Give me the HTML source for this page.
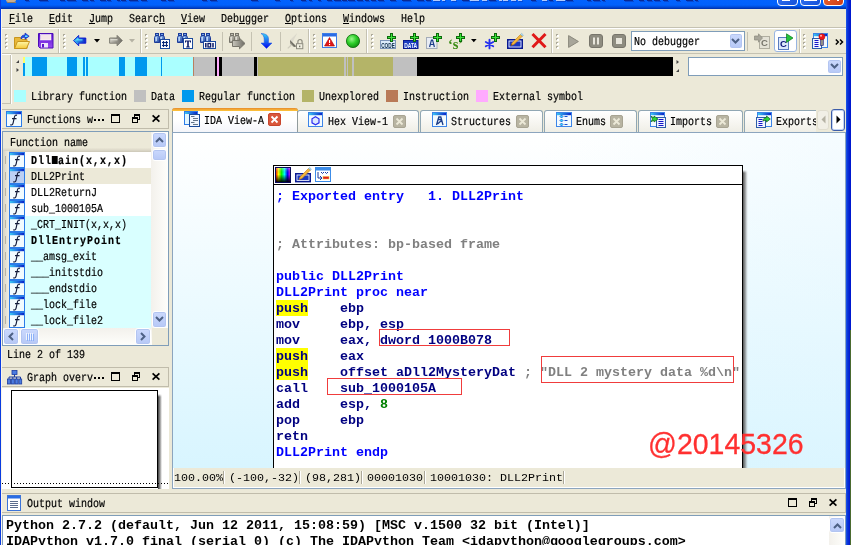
<!DOCTYPE html>
<html><head><meta charset="utf-8"><title>IDA</title>
<style>
html,body{margin:0;padding:0;}
body{width:851px;height:545px;overflow:hidden;background:#ECE9D8;position:relative;font-family:"Liberation Mono",monospace;font-size:10px;color:#000;}
.a{position:absolute;}
svg{position:absolute;overflow:visible;}
.ui{position:absolute;font-family:"Liberation Mono",monospace;font-size:12px;line-height:12px;white-space:pre;transform:scaleX(0.8333);transform-origin:0 0;color:#000;text-rendering:geometricPrecision;-webkit-text-stroke:0.2px #000;}
.ui b{font-weight:bold;letter-spacing:1.2px;}.ui b i{display:inline-block;width:7.2px;height:8px;background:#000;}
.code{position:absolute;font-family:"Liberation Mono",monospace;font-weight:bold;font-size:13.33px;line-height:16px;height:16px;white-space:pre;}
.st{position:absolute;font-family:"Liberation Mono",monospace;font-size:11.67px;line-height:14px;white-space:pre;color:#000;}
.vsep{position:absolute;width:1px;background:#ACA899;box-shadow:1px 0 0 #fff;}
.tsep{position:absolute;width:1px;height:19px;top:32px;background:#C5C2B2;}
.hdl{position:absolute;width:3px;height:16px;background-image:radial-gradient(circle at 2px 2px,#fff 0.8px,transparent 1.1px),radial-gradient(circle at 1px 1px,#ADAA9B 0.8px,transparent 1.1px);background-size:3px 4px;}
.sbtn{position:absolute;box-sizing:border-box;border:1px solid #fff;border-radius:3px;background:linear-gradient(#CBD9FD,#B6C8F6);box-shadow:inset 0 0 0 1px #B3C5F1;}
.tab{position:absolute;box-sizing:border-box;border:1px solid #91A7B4;border-bottom:none;border-radius:3px 3px 0 0;background:linear-gradient(#FFFFFF,#F6F5F0 60%,#EFEEE6);}
.cls{position:absolute;width:13px;height:13px;border-radius:2px;background:#B8B4A2;box-sizing:border-box;border:1px solid #A8A493;}
.nav i{position:absolute;top:0;height:100%;display:block;}
.ptitle{position:absolute;box-sizing:border-box;border:1px solid #C0BCAB;border-left:none;background:#ECE9D8;}
</style></head><body><div id="root" style="position:absolute;left:0;top:0;width:851px;height:545px;overflow:hidden;will-change:transform;">
<div class="a" style="left:0;top:0;width:851px;height:9px;background:linear-gradient(#0262FE 0,#0161FC 55%,#0052E4 72%,#003EC4 88%,#002FA6 100%);"></div>
<div class="a" style="left:6px;top:0;width:10px;height:2px;background:#C9AE8E;border-radius:0 0 2px 2px;"></div>
<div class="a" style="left:7px;top:2px;width:9px;height:1px;background:#8F7B66;"></div>
<div class="a" style="left:25px;top:0;width:4px;height:1px;background:#0A1C7C;opacity:.8"></div><div class="a" style="left:26px;top:1px;width:4px;height:1px;background:#0A2CA0;opacity:.45"></div><div class="a" style="left:39px;top:0;width:9px;height:1px;background:#0A1C7C;opacity:.8"></div><div class="a" style="left:40px;top:1px;width:9px;height:1px;background:#0A2CA0;opacity:.45"></div><div class="a" style="left:60px;top:0;width:5px;height:1px;background:#0A1C7C;opacity:.8"></div><div class="a" style="left:61px;top:1px;width:5px;height:1px;background:#0A2CA0;opacity:.45"></div><div class="a" style="left:67px;top:0;width:9px;height:1px;background:#0A1C7C;opacity:.8"></div><div class="a" style="left:68px;top:1px;width:9px;height:1px;background:#0A2CA0;opacity:.45"></div><div class="a" style="left:82px;top:0;width:6px;height:1px;background:#0A1C7C;opacity:.8"></div><div class="a" style="left:83px;top:1px;width:6px;height:1px;background:#0A2CA0;opacity:.45"></div><div class="a" style="left:90px;top:0;width:4px;height:1px;background:#0A1C7C;opacity:.8"></div><div class="a" style="left:91px;top:1px;width:4px;height:1px;background:#0A2CA0;opacity:.45"></div><div class="a" style="left:100px;top:0;width:6px;height:1px;background:#0A1C7C;opacity:.8"></div><div class="a" style="left:101px;top:1px;width:6px;height:1px;background:#0A2CA0;opacity:.45"></div><div class="a" style="left:107px;top:0;width:4px;height:1px;background:#0A1C7C;opacity:.8"></div><div class="a" style="left:108px;top:1px;width:4px;height:1px;background:#0A2CA0;opacity:.45"></div><div class="a" style="left:117px;top:0;width:3px;height:1px;background:#0A1C7C;opacity:.8"></div><div class="a" style="left:118px;top:1px;width:3px;height:1px;background:#0A2CA0;opacity:.45"></div><div class="a" style="left:121px;top:0;width:5px;height:1px;background:#0A1C7C;opacity:.8"></div><div class="a" style="left:122px;top:1px;width:5px;height:1px;background:#0A2CA0;opacity:.45"></div><div class="a" style="left:129px;top:0;width:9px;height:1px;background:#0A1C7C;opacity:.8"></div><div class="a" style="left:130px;top:1px;width:9px;height:1px;background:#0A2CA0;opacity:.45"></div><div class="a" style="left:141px;top:0;width:6px;height:1px;background:#0A1C7C;opacity:.8"></div><div class="a" style="left:142px;top:1px;width:6px;height:1px;background:#0A2CA0;opacity:.45"></div><div class="a" style="left:161px;top:0;width:5px;height:1px;background:#0A1C7C;opacity:.8"></div><div class="a" style="left:162px;top:1px;width:5px;height:1px;background:#0A2CA0;opacity:.45"></div><div class="a" style="left:168px;top:0;width:6px;height:1px;background:#0A1C7C;opacity:.8"></div><div class="a" style="left:169px;top:1px;width:6px;height:1px;background:#0A2CA0;opacity:.45"></div><div class="a" style="left:202px;top:0;width:5px;height:1px;background:#0A1C7C;opacity:.8"></div><div class="a" style="left:203px;top:1px;width:5px;height:1px;background:#0A2CA0;opacity:.45"></div><div class="a" style="left:210px;top:0;width:7px;height:1px;background:#0A1C7C;opacity:.8"></div><div class="a" style="left:211px;top:1px;width:7px;height:1px;background:#0A2CA0;opacity:.45"></div><div class="a" style="left:251px;top:0;width:7px;height:1px;background:#0A1C7C;opacity:.8"></div><div class="a" style="left:252px;top:1px;width:7px;height:1px;background:#0A2CA0;opacity:.45"></div><div class="a" style="left:275px;top:0;width:5px;height:1px;background:#0A1C7C;opacity:.8"></div><div class="a" style="left:276px;top:1px;width:5px;height:1px;background:#0A2CA0;opacity:.45"></div><div class="a" style="left:290px;top:0;width:3px;height:1px;background:#0A1C7C;opacity:.8"></div><div class="a" style="left:291px;top:1px;width:3px;height:1px;background:#0A2CA0;opacity:.45"></div><div class="a" style="left:301px;top:0;width:5px;height:1px;background:#0A1C7C;opacity:.8"></div><div class="a" style="left:302px;top:1px;width:5px;height:1px;background:#0A2CA0;opacity:.45"></div><div class="a" style="left:309px;top:0;width:3px;height:1px;background:#0A1C7C;opacity:.8"></div><div class="a" style="left:310px;top:1px;width:3px;height:1px;background:#0A2CA0;opacity:.45"></div><div class="a" style="left:318px;top:0;width:3px;height:1px;background:#0A1C7C;opacity:.8"></div><div class="a" style="left:319px;top:1px;width:3px;height:1px;background:#0A2CA0;opacity:.45"></div><div class="a" style="left:327px;top:0;width:5px;height:1px;background:#0A1C7C;opacity:.8"></div><div class="a" style="left:328px;top:1px;width:5px;height:1px;background:#0A2CA0;opacity:.45"></div><div class="a" style="left:334px;top:0;width:7px;height:1px;background:#0A1C7C;opacity:.8"></div><div class="a" style="left:335px;top:1px;width:7px;height:1px;background:#0A2CA0;opacity:.45"></div><div class="a" style="left:342px;top:0;width:5px;height:1px;background:#0A1C7C;opacity:.8"></div><div class="a" style="left:343px;top:1px;width:5px;height:1px;background:#0A2CA0;opacity:.45"></div><div class="a" style="left:348px;top:0;width:7px;height:1px;background:#0A1C7C;opacity:.8"></div><div class="a" style="left:349px;top:1px;width:7px;height:1px;background:#0A2CA0;opacity:.45"></div><div class="a" style="left:357px;top:0;width:6px;height:1px;background:#0A1C7C;opacity:.8"></div><div class="a" style="left:358px;top:1px;width:6px;height:1px;background:#0A2CA0;opacity:.45"></div><div class="a" style="left:365px;top:0;width:4px;height:1px;background:#0A1C7C;opacity:.8"></div><div class="a" style="left:366px;top:1px;width:4px;height:1px;background:#0A2CA0;opacity:.45"></div><div class="a" style="left:371px;top:0;width:5px;height:1px;background:#0A1C7C;opacity:.8"></div><div class="a" style="left:372px;top:1px;width:5px;height:1px;background:#0A2CA0;opacity:.45"></div><div class="a" style="left:378px;top:0;width:6px;height:1px;background:#0A1C7C;opacity:.8"></div><div class="a" style="left:379px;top:1px;width:6px;height:1px;background:#0A2CA0;opacity:.45"></div><div class="a" style="left:390px;top:0;width:6px;height:1px;background:#0A1C7C;opacity:.8"></div><div class="a" style="left:391px;top:1px;width:6px;height:1px;background:#0A2CA0;opacity:.45"></div><div class="a" style="left:402px;top:0;width:9px;height:1px;background:#0A1C7C;opacity:.8"></div><div class="a" style="left:403px;top:1px;width:9px;height:1px;background:#0A2CA0;opacity:.45"></div><div class="a" style="left:417px;top:0;width:7px;height:1px;background:#0A1C7C;opacity:.8"></div><div class="a" style="left:418px;top:1px;width:7px;height:1px;background:#0A2CA0;opacity:.45"></div><div class="a" style="left:426px;top:0;width:5px;height:1px;background:#0A1C7C;opacity:.8"></div><div class="a" style="left:427px;top:1px;width:5px;height:1px;background:#0A2CA0;opacity:.45"></div><div class="a" style="left:433px;top:0;width:7px;height:1px;background:#DDE6FF;opacity:.8"></div><div class="a" style="left:434px;top:1px;width:7px;height:1px;background:#0A2CA0;opacity:.45"></div><div class="a" style="left:442px;top:0;width:3px;height:1px;background:#DDE6FF;opacity:.8"></div><div class="a" style="left:443px;top:1px;width:3px;height:1px;background:#0A2CA0;opacity:.45"></div><div class="a" style="left:451px;top:0;width:5px;height:1px;background:#DDE6FF;opacity:.8"></div><div class="a" style="left:452px;top:1px;width:5px;height:1px;background:#0A2CA0;opacity:.45"></div><div class="a" style="left:462px;top:0;width:7px;height:1px;background:#0A1C7C;opacity:.8"></div><div class="a" style="left:463px;top:1px;width:7px;height:1px;background:#0A2CA0;opacity:.45"></div><div class="a" style="left:470px;top:0;width:9px;height:1px;background:#DDE6FF;opacity:.8"></div><div class="a" style="left:471px;top:1px;width:9px;height:1px;background:#0A2CA0;opacity:.45"></div><div class="a" style="left:482px;top:0;width:5px;height:1px;background:#DDE6FF;opacity:.8"></div><div class="a" style="left:483px;top:1px;width:5px;height:1px;background:#0A2CA0;opacity:.45"></div><div class="a" style="left:489px;top:0;width:7px;height:1px;background:#0A1C7C;opacity:.8"></div><div class="a" style="left:490px;top:1px;width:7px;height:1px;background:#0A2CA0;opacity:.45"></div><div class="a" style="left:499px;top:0;width:3px;height:1px;background:#DDE6FF;opacity:.8"></div><div class="a" style="left:500px;top:1px;width:3px;height:1px;background:#0A2CA0;opacity:.45"></div><div class="a" style="left:503px;top:0;width:5px;height:1px;background:#DDE6FF;opacity:.8"></div><div class="a" style="left:504px;top:1px;width:5px;height:1px;background:#0A2CA0;opacity:.45"></div><div class="a" style="left:511px;top:0;width:5px;height:1px;background:#DDE6FF;opacity:.8"></div><div class="a" style="left:512px;top:1px;width:5px;height:1px;background:#0A2CA0;opacity:.45"></div><div class="a" style="left:518px;top:0;width:4px;height:1px;background:#DDE6FF;opacity:.8"></div><div class="a" style="left:519px;top:1px;width:4px;height:1px;background:#0A2CA0;opacity:.45"></div><div class="a" style="left:531px;top:0;width:5px;height:1px;background:#0A1C7C;opacity:.8"></div><div class="a" style="left:532px;top:1px;width:5px;height:1px;background:#0A2CA0;opacity:.45"></div><div class="a" style="left:542px;top:0;width:5px;height:1px;background:#DDE6FF;opacity:.8"></div><div class="a" style="left:543px;top:1px;width:5px;height:1px;background:#0A2CA0;opacity:.45"></div><div class="a" style="left:549px;top:0;width:4px;height:1px;background:#0A1C7C;opacity:.8"></div><div class="a" style="left:550px;top:1px;width:4px;height:1px;background:#0A2CA0;opacity:.45"></div><div class="a" style="left:556px;top:0;width:9px;height:1px;background:#DDE6FF;opacity:.8"></div><div class="a" style="left:557px;top:1px;width:9px;height:1px;background:#0A2CA0;opacity:.45"></div><div class="a" style="left:566px;top:0;width:7px;height:1px;background:#0A1C7C;opacity:.8"></div><div class="a" style="left:567px;top:1px;width:7px;height:1px;background:#0A2CA0;opacity:.45"></div><div class="a" style="left:587px;top:0;width:4px;height:1px;background:#0A1C7C;opacity:.8"></div><div class="a" style="left:588px;top:1px;width:4px;height:1px;background:#0A2CA0;opacity:.45"></div><div class="a" style="left:593px;top:0;width:7px;height:1px;background:#0A1C7C;opacity:.8"></div><div class="a" style="left:594px;top:1px;width:7px;height:1px;background:#0A2CA0;opacity:.45"></div><div class="a" style="left:602px;top:0;width:3px;height:1px;background:#0A1C7C;opacity:.8"></div><div class="a" style="left:603px;top:1px;width:3px;height:1px;background:#0A2CA0;opacity:.45"></div><div class="a" style="left:624px;top:0;width:9px;height:1px;background:#0A1C7C;opacity:.8"></div><div class="a" style="left:625px;top:1px;width:9px;height:1px;background:#0A2CA0;opacity:.45"></div><div class="a" style="left:639px;top:0;width:5px;height:1px;background:#0A1C7C;opacity:.8"></div><div class="a" style="left:640px;top:1px;width:5px;height:1px;background:#0A2CA0;opacity:.45"></div><div class="a" style="left:647px;top:0;width:5px;height:1px;background:#0A1C7C;opacity:.8"></div><div class="a" style="left:648px;top:1px;width:5px;height:1px;background:#0A2CA0;opacity:.45"></div><div class="a" style="left:654px;top:0;width:6px;height:1px;background:#0A1C7C;opacity:.8"></div><div class="a" style="left:655px;top:1px;width:6px;height:1px;background:#0A2CA0;opacity:.45"></div><div class="a" style="left:663px;top:0;width:5px;height:1px;background:#0A1C7C;opacity:.8"></div><div class="a" style="left:664px;top:1px;width:5px;height:1px;background:#0A2CA0;opacity:.45"></div><div class="a" style="left:676px;top:0;width:4px;height:1px;background:#0A1C7C;opacity:.8"></div><div class="a" style="left:677px;top:1px;width:4px;height:1px;background:#0A2CA0;opacity:.45"></div><div class="a" style="left:686px;top:0;width:7px;height:1px;background:#0A1C7C;opacity:.8"></div><div class="a" style="left:687px;top:1px;width:7px;height:1px;background:#0A2CA0;opacity:.45"></div><div class="a" style="left:695px;top:0;width:3px;height:1px;background:#0A1C7C;opacity:.8"></div><div class="a" style="left:696px;top:1px;width:3px;height:1px;background:#0A2CA0;opacity:.45"></div><div class="a" style="left:777px;top:-14px;width:21px;height:20px;border-radius:4px;border:1px solid #fff;box-sizing:border-box;background:linear-gradient(135deg,#3C7CF8,#1450D8);"></div>
<div class="a" style="left:800px;top:-14px;width:21px;height:20px;border-radius:4px;border:1px solid #fff;box-sizing:border-box;background:linear-gradient(135deg,#3C7CF8,#1450D8);"></div>
<div class="a" style="left:823px;top:-14px;width:21px;height:20px;border-radius:4px;border:1px solid #fff;box-sizing:border-box;background:linear-gradient(135deg,#F0703C,#D03C14);"></div>
<div class="a" style="left:782px;top:0;width:8px;height:1px;background:#fff;"></div>
<div class="a" style="left:804px;top:0;width:13px;height:1px;background:#fff;"></div>
<div class="a" style="left:828px;top:0;width:2px;height:1px;background:#fff;"></div><div class="a" style="left:837px;top:0;width:2px;height:1px;background:#fff;"></div>
<div class="a" style="left:0;top:0;width:1px;height:545px;background:#0A3CE0;"></div><div class="a" style="left:1px;top:9px;width:1px;height:536px;background:#FAF6EA;"></div>
<div class="a" style="left:846px;top:0;width:4px;height:545px;background:linear-gradient(90deg,#1F5BEA,#0A34D8 40%,#0019CF);"></div><div class="a" style="left:850px;top:0;width:1px;height:330px;background:#0019CF;"></div><div class="a" style="left:850px;top:330px;width:1px;height:215px;background:#4A6A30;"></div>
<div class="ui" style="left:9px;top:13px;"><u>F</u>ile</div><div class="ui" style="left:49px;top:13px;"><u>E</u>dit</div><div class="ui" style="left:89px;top:13px;"><u>J</u>ump</div><div class="ui" style="left:129px;top:13px;">Searc<u>h</u></div><div class="ui" style="left:181px;top:13px;"><u>V</u>iew</div><div class="ui" style="left:221px;top:13px;">Deb<u>u</u>gger</div><div class="ui" style="left:285px;top:13px;"><u>O</u>ptions</div><div class="ui" style="left:343px;top:13px;"><u>W</u>indows</div><div class="ui" style="left:401px;top:13px;">Help</div><div class="a" style="left:2px;top:27px;width:844px;height:1px;background:#C5C2B2;"></div><div class="a" style="left:2px;top:28px;width:844px;height:1px;background:#fff;"></div><div class="a" style="left:2px;top:53px;width:844px;height:1px;background:#C5C2B2;"></div><div class="a" style="left:2px;top:54px;width:9px;height:1px;background:#fff;"></div><div class="a" style="left:58px;top:29px;width:1px;height:24px;background:#C5C2B2;"></div><div class="a" style="left:59px;top:29px;width:1px;height:24px;background:#fff;"></div><div class="a" style="left:140px;top:29px;width:1px;height:24px;background:#C5C2B2;"></div><div class="a" style="left:141px;top:29px;width:1px;height:24px;background:#fff;"></div><div class="a" style="left:308px;top:29px;width:1px;height:24px;background:#C5C2B2;"></div><div class="a" style="left:309px;top:29px;width:1px;height:24px;background:#fff;"></div><div class="a" style="left:366px;top:29px;width:1px;height:24px;background:#C5C2B2;"></div><div class="a" style="left:367px;top:29px;width:1px;height:24px;background:#fff;"></div><div class="a" style="left:551px;top:29px;width:1px;height:24px;background:#C5C2B2;"></div><div class="a" style="left:552px;top:29px;width:1px;height:24px;background:#fff;"></div><div class="a" style="left:799px;top:29px;width:1px;height:24px;background:#C5C2B2;"></div><div class="a" style="left:800px;top:29px;width:1px;height:24px;background:#fff;"></div><div class="hdl" style="left:5px;top:34px;"></div><div class="hdl" style="left:63px;top:34px;"></div><div class="hdl" style="left:145px;top:34px;"></div><div class="hdl" style="left:313px;top:34px;"></div><div class="hdl" style="left:371px;top:34px;"></div><div class="hdl" style="left:556px;top:34px;"></div><div class="hdl" style="left:803px;top:34px;"></div><div class="tsep" style="left:222px;"></div><div class="tsep" style="left:251px;"></div><div class="tsep" style="left:280px;"></div><div class="tsep" style="left:747px;"></div><svg width="0" height="0" style="left:0;top:0"><defs>
<linearGradient id="gFold" x1="0" y1="0" x2="0" y2="1"><stop offset="0" stop-color="#FFF7A8"/><stop offset="1" stop-color="#F5C93A"/></linearGradient>
<linearGradient id="gBlue" x1="0" y1="0" x2="1" y2="0"><stop offset="0" stop-color="#39C6F4"/><stop offset="1" stop-color="#0A22C8"/></linearGradient>
<linearGradient id="gBlueV" x1="0" y1="0" x2="0" y2="1"><stop offset="0" stop-color="#35D7F5"/><stop offset="1" stop-color="#0000F0"/></linearGradient>
<linearGradient id="gGray" x1="0" y1="0" x2="1" y2="0"><stop offset="0" stop-color="#C8C6BC"/><stop offset="1" stop-color="#6C6A62"/></linearGradient>
<linearGradient id="gBin" x1="0" y1="0" x2="1" y2="1"><stop offset="0" stop-color="#9CC8F8"/><stop offset="1" stop-color="#1A3C9C"/></linearGradient>
<linearGradient id="gBinG" x1="0" y1="0" x2="1" y2="1"><stop offset="0" stop-color="#D4D2C8"/><stop offset="1" stop-color="#7A786E"/></linearGradient>
<radialGradient id="gBall" cx="0.4" cy="0.35" r="0.7"><stop offset="0" stop-color="#9CF58C"/><stop offset="0.5" stop-color="#2FCF2A"/><stop offset="1" stop-color="#0E8A0E"/></radialGradient>
<linearGradient id="gPurp" x1="0" y1="0" x2="0" y2="1"><stop offset="0" stop-color="#5A0FD0"/><stop offset="1" stop-color="#9A4CF0"/></linearGradient>
<linearGradient id="gRain" x1="0" y1="0" x2="1" y2="0"><stop offset="0" stop-color="#f00"/><stop offset="0.2" stop-color="#ff0"/><stop offset="0.4" stop-color="#0f0"/><stop offset="0.6" stop-color="#0ff"/><stop offset="0.8" stop-color="#00f"/><stop offset="1" stop-color="#f0f"/></linearGradient>
<linearGradient id="gRainV" x1="0" y1="0" x2="0" y2="1"><stop offset="0" stop-color="#fff" stop-opacity=".35"/><stop offset="0.45" stop-color="#000" stop-opacity="0"/><stop offset="1" stop-color="#000" stop-opacity=".95"/></linearGradient>
<linearGradient id="gF" x1="0" y1="0" x2="0" y2="1"><stop offset="0" stop-color="#2A6CE0"/><stop offset="0.3" stop-color="#9CC4F8"/><stop offset="0.45" stop-color="#fff"/></linearGradient>
</defs></svg><svg style="left:14px;top:33px" width="16" height="16" viewBox="0 0 16 16"><path d="M0.5 4.5h6l1.5 2h5v9h-12.5z" fill="#E9B93A" stroke="#C8961E"/><path d="M3.5 8.5h12l-3 7h-12z" fill="url(#gFold)" stroke="#C8961E"/><path d="M7 6 C7 2.5 9 2 11 2 V0 L15.2 3.2 L11 6.3 V4.3 C9.5 4.3 8.5 4.5 7 6Z" fill="#1E50E8" stroke="#0A1CB0" stroke-width=".6"/><path d="M11 2.6h2l1 .7-1 .7h-2z" fill="#5CE8FF"/></svg><svg style="left:38px;top:33px" width="16" height="16" viewBox="0 0 16 16"><path d="M0.5 0.5h14.5v14.5h-13l-1.5-1.5z" fill="url(#gPurp)" stroke="#4A0CB8"/><rect x="2.5" y="1.5" width="10.5" height="5.5" fill="#F4E4E8" stroke="#fff" stroke-width=".5"/><rect x="3" y="10" width="7" height="4.5" fill="#EDE6FA"/><rect x="4" y="11" width="2" height="3.5" fill="#5A12C8"/></svg><svg style="left:73px;top:35px" width="14" height="12" viewBox="0 0 14 12"><path d="M0.500 5.600 L5.700 0.400 V3 H12.800 V8.200 H5.700 V10.800Z" fill="url(#gBlue)" stroke="#0A14D0" stroke-width=".9"/><path d="M2.200 5.500 L5.400 2.600 V4.300 H9.500 V5.500Z" fill="#6CF0FF" opacity=".8"/></svg><svg style="left:94px;top:39px" width="6" height="4" viewBox="0 0 6 4"><path d="M0 0h6L3 3.5z" fill="#000"/></svg><svg style="left:109px;top:35px" width="14" height="12" viewBox="0 0 14 12"><path d="M13.300 5.600 L8.100 0.400 V3 H0.600 V8.200 H8.100 V10.800Z" fill="url(#gGray)" stroke="#77756B" stroke-width=".9"/><path d="M1.500 4h7v1.400h-7z" fill="#E4E2D8" opacity=".8"/></svg><svg style="left:129px;top:39px" width="6" height="4" viewBox="0 0 6 4"><path d="M0 0h6L3 3.5z" fill="#B5B2A4"/></svg><svg style="left:154px;top:33px" width="17" height="17" viewBox="0 0 17 17"><g><rect x="1.5" y="0.5" width="3" height="3" fill="#6EA0E8" stroke="#1C3A98"/><rect x="6.5" y="0.5" width="3" height="3" fill="#6EA0E8" stroke="#1C3A98"/><path d="M0.5 4.5 L1.5 2.5 H4.5 L5.5 4.5 V9.5 H0.5Z" fill="url(#gBin)" stroke="#1C3A98"/><path d="M5.5 4.5 L6.5 2.5 H9.5 L10.5 4.5 V9.5 H5.5Z" fill="url(#gBin)" stroke="#1C3A98"/><rect x="1.5" y="4" width="1.5" height="4" fill="#CFE6FF" opacity=".8"/><rect x="6.5" y="4" width="1.5" height="4" fill="#CFE6FF" opacity=".8"/></g><rect x="6.5" y="6.5" width="9" height="9" fill="#fff" stroke="#1C4A9C"/><path d="M9.5 8v6M12.5 8v6M8 9.5h6M8 12.5h6" stroke="#0A2A78" stroke-width="1.2"/></svg><svg style="left:177px;top:33px" width="17" height="17" viewBox="0 0 17 17"><g><rect x="1.5" y="0.5" width="3" height="3" fill="#6EA0E8" stroke="#1C3A98"/><rect x="6.5" y="0.5" width="3" height="3" fill="#6EA0E8" stroke="#1C3A98"/><path d="M0.5 4.5 L1.5 2.5 H4.5 L5.5 4.5 V9.5 H0.5Z" fill="url(#gBin)" stroke="#1C3A98"/><path d="M5.5 4.5 L6.5 2.5 H9.5 L10.5 4.5 V9.5 H5.5Z" fill="url(#gBin)" stroke="#1C3A98"/><rect x="1.5" y="4" width="1.5" height="4" fill="#CFE6FF" opacity=".8"/><rect x="6.5" y="4" width="1.5" height="4" fill="#CFE6FF" opacity=".8"/></g><rect x="6.5" y="5.5" width="9" height="10" fill="#fff" stroke="#1C4A9C"/><path d="M8 7.5h6v2h-1v-1h-1.2v5h1v1h-3.6v-1h1v-5H9v1H8z" fill="#0A1A68"/></svg><svg style="left:200px;top:33px" width="17" height="17" viewBox="0 0 17 17"><g><rect x="1.5" y="0.5" width="3" height="3" fill="#6EA0E8" stroke="#1C3A98"/><rect x="6.5" y="0.5" width="3" height="3" fill="#6EA0E8" stroke="#1C3A98"/><path d="M0.5 4.5 L1.5 2.5 H4.5 L5.5 4.5 V9.5 H0.5Z" fill="url(#gBin)" stroke="#1C3A98"/><path d="M5.5 4.5 L6.5 2.5 H9.5 L10.5 4.5 V9.5 H5.5Z" fill="url(#gBin)" stroke="#1C3A98"/><rect x="1.5" y="4" width="1.5" height="4" fill="#CFE6FF" opacity=".8"/><rect x="6.5" y="4" width="1.5" height="4" fill="#CFE6FF" opacity=".8"/></g><rect x="3.5" y="8.5" width="12" height="7" fill="#fff" stroke="#1C4A9C"/><path d="M5.800 10v4.500M13 10v4.500" stroke="#0A1A68" stroke-width="1.500"/><rect x="8" y="10.500" width="2.600" height="3.500" fill="none" stroke="#0A1A68" stroke-width="1.300"/></svg><svg style="left:229px;top:33px" width="17" height="17" viewBox="0 0 17 17"><g><rect x="1.5" y="0.5" width="3" height="3" fill="#BDBBB0" stroke="#77756B"/><rect x="6.5" y="0.5" width="3" height="3" fill="#BDBBB0" stroke="#77756B"/><path d="M0.5 4.5 L1.5 2.5 H4.5 L5.5 4.5 V9.5 H0.5Z" fill="url(#gBinG)" stroke="#77756B"/><path d="M5.5 4.5 L6.5 2.5 H9.5 L10.5 4.5 V9.5 H5.5Z" fill="url(#gBinG)" stroke="#77756B"/><rect x="1.5" y="4" width="1.5" height="4" fill="#E8E6DC" opacity=".8"/><rect x="6.5" y="4" width="1.5" height="4" fill="#E8E6DC" opacity=".8"/></g><path d="M3.5 7.5h7V5.2L16 10.5 10.5 15.8V13.5h-7z" fill="url(#gGray)" stroke="#77756B"/></svg><svg style="left:260px;top:33px" width="13" height="16" viewBox="0 0 13 16"><path d="M1 0.5 C5 0.5 8.5 2 8.5 6 V10 H12 L6.5 15.5 L1 10 H4.2 V6.5 C4.2 3.5 3 1.5 1 0.5Z" fill="url(#gBlueV)" stroke="#1C50E0" stroke-width=".5"/></svg><svg style="left:287px;top:33px" width="17" height="17" viewBox="0 0 17 17"><path d="M10.300 0 L3 7 L5.500 9.500Z" fill="#DCD9CC"/><path d="M3 7 L9.500 13.500 L7 13.900 L3.200 10.800Z" fill="#6E6C62"/><path d="M3.200 9 L6.500 13 L5.500 13.300 L3.200 10.800Z" fill="#A8A69A"/><path d="M4.600 12.700 L1.200 15.800 L0.300 15 L3.600 11.700Z" fill="#CFCCBE"/><rect x="9.500" y="10.700" width="6.300" height="5" fill="#F2F0E2" stroke="#8E8C80"/><path d="M10.900 10.500V8.600a2.100 2.100 0 0 1 4.200 0V10.500" fill="none" stroke="#8E8C80" stroke-width="1.200"/><rect x="12.200" y="12.600" width="1.100" height="1.600" fill="#55534A"/></svg><svg style="left:322px;top:33px" width="15" height="15" viewBox="0 0 15 15"><rect x="0.5" y="0.5" width="14" height="14" fill="#fff" stroke="#3C7CE8"/><rect x="1" y="1" width="13" height="2.5" fill="#2A6CE4"/><path d="M7.500 4.500 L12.500 13 H2.500Z" fill="#E01818" stroke="#A80808" stroke-width=".6"/><rect x="7" y="7" width="1.100" height="3" fill="#fff"/><rect x="7" y="11" width="1.100" height="1.100" fill="#fff"/></svg><svg style="left:346px;top:34px" width="14" height="14" viewBox="0 0 14 14"><circle cx="7" cy="7" r="6.600" fill="url(#gBall)" stroke="#0A6A0A" stroke-width=".8"/></svg><svg style="left:380px;top:33px" width="17" height="17" viewBox="0 0 17 17"><rect x="0.500" y="7.500" width="15" height="8" fill="#DDEBFA" stroke="#7C94B8"/><text x="8" y="14.600" font-family="Liberation Sans" font-weight="bold" font-size="7" text-anchor="middle" fill="#0A2A48" textLength="13.500" lengthAdjust="spacingAndGlyphs">CODE</text><g transform="translate(7 0)"><path d="M3 0h3v3h3v3h-3v3h-3v-3h-3v-3h3z" fill="#0C6A0C"/><path d="M4 1h1v3h3v1h-3v3h-1v-3h-3v-1h3z" fill="#3CE43C"/></g></svg><svg style="left:403px;top:33px" width="17" height="17" viewBox="0 0 17 17"><rect x="0.500" y="7.500" width="14.500" height="8" fill="#1C3CC0" stroke="#0A1A90"/><text x="7.700" y="14.600" font-family="Liberation Sans" font-weight="bold" font-size="7" text-anchor="middle" fill="#F0F6FF" textLength="13" lengthAdjust="spacingAndGlyphs">DATA</text><g transform="translate(7 0)"><path d="M3 0h3v3h3v3h-3v3h-3v-3h-3v-3h3z" fill="#0C6A0C"/><path d="M4 1h1v3h3v1h-3v3h-1v-3h-3v-1h3z" fill="#3CE43C"/></g></svg><svg style="left:426px;top:33px" width="17" height="17" viewBox="0 0 17 17"><rect x="0.500" y="4.500" width="10.500" height="11" fill="#E8ECF4" stroke="#A4ACB8"/><path d="M3.600 14 L5.300 7.500 h1.400 L8.400 14 M4.600 11.500h2.800 M5 7h2" fill="none" stroke="#1C3C88" stroke-width="1.200"/><g transform="translate(7 0)"><path d="M3 0h3v3h3v3h-3v3h-3v-3h-3v-3h3z" fill="#0C6A0C"/><path d="M4 1h1v3h3v1h-3v3h-1v-3h-3v-1h3z" fill="#3CE43C"/></g></svg><svg style="left:448px;top:33px" width="18" height="17" viewBox="0 0 18 17"><text x="0" y="16" font-family="Liberation Serif" font-weight="bold" font-size="14.500" fill="#3A8C14">‘s’</text><g transform="translate(8 0)"><path d="M3 0h3v3h3v3h-3v3h-3v-3h-3v-3h3z" fill="#0C6A0C"/><path d="M4 1h1v3h3v1h-3v3h-1v-3h-3v-1h3z" fill="#3CE43C"/></g></svg><svg style="left:471px;top:39px" width="6" height="4" viewBox="0 0 6 4"><path d="M0 0h5.600L2.800 3.300z" fill="#000"/></svg><svg style="left:484px;top:33px" width="17" height="17" viewBox="0 0 17 17"><g stroke="#2430F0" stroke-width="1.900" stroke-linecap="round"><path d="M5.500 6.800v8.600M1.800 9l7.400 4.300M1.800 13.300l7.400-4.300"/></g><g transform="translate(7 0)"><path d="M3 0h3v3h3v3h-3v3h-3v-3h-3v-3h3z" fill="#0C6A0C"/><path d="M4 1h1v3h3v1h-3v3h-1v-3h-3v-1h3z" fill="#3CE43C"/></g></svg><svg style="left:507px;top:33px" width="17" height="17" viewBox="0 0 17 17"><rect x="0.700" y="6.700" width="14.600" height="8.600" fill="#1C38C0" stroke="#0A1A90" stroke-width="1.400"/><rect x="2" y="8" width="12" height="6" fill="none" stroke="#fff" stroke-width=".8"/><path d="M4 12.500 L5 10 L13.500 1.500 L15.500 3 L7 11.500Z" fill="#F4B83C" stroke="#C47A14" stroke-width=".6"/><path d="M13.500 1.500 L14.600 0.400 L16.400 2 L15.500 3Z" fill="#BCE4F8" stroke="#5A9CC8" stroke-width=".5"/><path d="M4 12.500 L4.500 11.200 L5.500 12Z" fill="#402000"/></svg><svg style="left:531px;top:33px" width="16" height="15" viewBox="0 0 16 15"><path d="M1.500 1 L14.500 14.200 M14.500 1 L1.500 14.200" stroke="#E01818" stroke-width="3" stroke-linecap="butt"/></svg><svg style="left:568px;top:35px" width="11" height="13" viewBox="0 0 11 13"><path d="M0.600 0.600 L10.400 6.500 L0.600 12.400Z" fill="#A8A69A" stroke="#8A887C"/></svg><svg style="left:589px;top:34px" width="14" height="14" viewBox="0 0 14 14"><rect x="0.500" y="0.500" width="13" height="13" rx="2.500" fill="#8E8C80" stroke="#77756B"/><rect x="4" y="3.500" width="2" height="7" fill="#E8E6DC"/><rect x="8" y="3.500" width="2" height="7" fill="#E8E6DC"/></svg><svg style="left:612px;top:34px" width="14" height="14" viewBox="0 0 14 14"><rect x="0.500" y="0.500" width="13" height="13" rx="2.500" fill="#8E8C80" stroke="#77756B"/><rect x="4" y="4" width="6" height="6" fill="#E8E6DC"/></svg><div class="a" style="left:631px;top:31px;width:114px;height:20px;box-sizing:border-box;border:1px solid #7F9DB9;background:#fff;"></div><div class="ui" style="left:634px;top:36px;">No debugger</div><div class="sbtn" style="left:729px;top:33px;width:14px;height:16px;"></div><svg style="left:731px;top:38px" width="9" height="7" viewBox="0 0 9 7"><path d="M1 1 L4.500 4.500 L8 1" fill="none" stroke="#4D6185" stroke-width="2"/></svg><svg style="left:754px;top:33px" width="17" height="17" viewBox="0 0 17 17"><rect x="5.500" y="3.500" width="10" height="12" fill="#E4E2D6" stroke="#B0AEA0"/><text x="10.500" y="13" font-family="Liberation Sans" font-weight="bold" font-size="9.500" text-anchor="middle" fill="#77756B">C</text><path d="M0.500 3h4V0.800L8.500 5 4.500 9.200V7h-4z" fill="#A8A69A" stroke="#8A887C" stroke-width=".7"/></svg><div class="a" style="left:774px;top:30px;width:23px;height:22px;box-sizing:border-box;border:1px solid #98B5E2;border-radius:3px;background:#fff;"></div><svg style="left:778px;top:33px" width="17" height="17" viewBox="0 0 17 17"><rect x="0.500" y="4.500" width="10" height="12" fill="#DCE8FA" stroke="#5A7CC0"/><text x="5.500" y="14" font-family="Liberation Sans" font-weight="bold" font-size="9.500" text-anchor="middle" fill="#0A1478">C</text><path d="M8.500 0.800 L15 5 L8.500 9.500Z" fill="#22C43C" stroke="#0A7A1A" stroke-width=".7"/></svg><svg style="left:812px;top:33px" width="17" height="16" viewBox="0 0 17 16"><rect x="1.500" y="0.500" width="14" height="14" fill="#F2FAFF" stroke="#3C84E8"/><rect x="2" y="1" width="13" height="2.200" fill="url(#gBlue)"/><rect x="0.500" y="5.500" width="9" height="10" fill="#EEF4FF" stroke="#2C5CA8"/><path d="M2.500 7.500h4M2.500 9.500h4M2.500 11.500h4M2.500 13.500h4" stroke="#1414C8" stroke-width="1"/><rect x="8.600" y="6.500" width="2.700" height="6" fill="#908E86" stroke="#1C1C78" stroke-width=".6"/><circle cx="9.900" cy="3.700" r="3" fill="#F01818" stroke="#B00808" stroke-width=".5"/><circle cx="9" cy="2.800" r="1" fill="#FFB8B8"/></svg><svg style="left:835px;top:39px" width="9" height="6" viewBox="0 0 9 6"><path d="M0.800 0.500 L3.300 3 L0.800 5.500 M5 0.500 L7.500 3 L5 5.500" fill="none" stroke="#000" stroke-width="1.500"/></svg><div class="a" style="left:10px;top:55px;width:1px;height:49px;background:#C5C2B2;"></div><div class="a" style="left:11px;top:55px;width:1px;height:49px;background:#fff;"></div><div class="a" style="left:2px;top:103px;width:9px;height:1px;background:#C5C2B2;"></div><svg style="left:16px;top:60px" width="4" height="12" viewBox="0 0 4 12"><path d="M3 0v3h-3z" fill="#444"/><path d="M0.500 8l2.500 2-2.500 2z" fill="#444"/></svg><div class="a nav" style="left:0;top:57px;width:700px;height:19px;"><i style="left:23px;width:2px;background:#0099EE"></i><i style="left:25px;width:7px;background:#AAFFFF"></i><i style="left:32px;width:15px;background:#0099EE"></i><i style="left:47px;width:20px;background:#AAFFFF"></i><i style="left:67px;width:10px;background:#0099EE"></i><i style="left:77px;width:6px;background:#AAFFFF"></i><i style="left:83px;width:1.5px;background:#0099EE"></i><i style="left:84.5px;width:1.5px;background:#AAFFFF"></i><i style="left:86px;width:2px;background:#0099EE"></i><i style="left:88px;width:31px;background:#AAFFFF"></i><i style="left:119px;width:6px;background:#0099EE"></i><i style="left:125px;width:10px;background:#AAFFFF"></i><i style="left:135px;width:12px;background:#0099EE"></i><i style="left:147px;width:14px;background:#AAFFFF"></i><i style="left:161px;width:1px;background:#0099EE"></i><i style="left:162px;width:31px;background:#AAFFFF"></i><i style="left:193px;width:1px;background:#B98060"></i><i style="left:194px;width:21px;background:#C0C0C0"></i><i style="left:215px;width:2px;background:#000"></i><i style="left:217px;width:2px;background:#FFAAFF"></i><i style="left:219px;width:3px;background:#000"></i><i style="left:222px;width:32px;background:#C0C0C0"></i><i style="left:254px;width:3px;background:#000"></i><i style="left:257px;width:1px;background:#C0C0C0"></i><i style="left:258px;width:135px;background:#B4B468"></i><i style="left:393px;width:24px;background:#C0C0C0"></i><i style="left:417px;width:256px;background:#000"></i><i style="left:343.7px;width:2.1000000000000227px;background:#C0C0C0"></i><i style="left:347px;width:1px;background:#C0C0C0"></i><i style="left:351.5px;width:2.5px;background:#C0C0C0"></i><i style="left:23px;width:2px;height:6px;background:#FFFF66"></i></div><svg style="left:676px;top:60px" width="4" height="14" viewBox="0 0 4 14"><path d="M0.500 0l2.500 2-2.500 2z" fill="#444"/><path d="M3 9v3h-3z" fill="#444"/></svg><div class="a" style="left:688px;top:57px;width:155px;height:19px;box-sizing:border-box;border:1px solid #7F9DB9;background:#fff;"></div><div class="sbtn" style="left:827px;top:59px;width:15px;height:15px;"></div><svg style="left:830px;top:63px" width="9" height="7" viewBox="0 0 9 7"><path d="M1 1 L4.500 4.500 L8 1" fill="none" stroke="#4D6185" stroke-width="2"/></svg><div class="a" style="left:14px;top:90px;width:12px;height:12px;background:#AAFFFF"></div><div class="ui" style="left:31px;top:91px;">Library function</div><div class="a" style="left:134px;top:90px;width:12px;height:12px;background:#C0C0C0"></div><div class="ui" style="left:151px;top:91px;">Data</div><div class="a" style="left:182px;top:90px;width:12px;height:12px;background:#0099EE"></div><div class="ui" style="left:199px;top:91px;">Regular function</div><div class="a" style="left:302px;top:90px;width:12px;height:12px;background:#B4B468"></div><div class="ui" style="left:319px;top:91px;">Unexplored</div><div class="a" style="left:386px;top:90px;width:12px;height:12px;background:#B97A57"></div><div class="ui" style="left:403px;top:91px;">Instruction</div><div class="a" style="left:476px;top:90px;width:12px;height:12px;background:#FFAAFF"></div><div class="ui" style="left:493px;top:91px;">External symbol</div><div class="ptitle" style="left:2px;top:109px;width:167px;height:20px;"></div><svg style="left:6px;top:111px" width="16" height="16" viewBox="0 0 16 16"><rect x="0.500" y="0.500" width="15" height="15" fill="#F2FBFF" stroke="#2C7CE8"/><rect x="1" y="1" width="14" height="2.200" fill="url(#gBlue)"/><path d="M11 4.400c-1.400-.600-2.200 0-2.600 1.700L7.100 12.100c-.4 1.700-1.400 2.200-2.900 1.700M6 7.600h4.500" fill="none" stroke="#141C3C" stroke-width="1.150"/></svg><div class="ui" style="left:27px;top:114px;">Functions w</div><svg style="left:93px;top:119px" width="12" height="2" viewBox="0 0 12 2"><path d="M1 0h2v2h-2zM5 0h2v2h-2zM9 0h2v2h-2z" fill="#000"/></svg><svg style="left:111px;top:114px" width="9" height="9" viewBox="0 0 9 9"><rect x="0.500" y="0.500" width="8" height="8" fill="none" stroke="#000" stroke-width="1"/><rect x="0" y="0" width="9" height="2" fill="#000"/></svg><svg style="left:132px;top:114px" width="8" height="9" viewBox="0 0 8 9"><rect x="2.500" y="0.500" width="5" height="5" fill="none" stroke="#000" stroke-width="1"/><rect x="2" y="0" width="6" height="2" fill="#000"/><rect x="0.500" y="3.500" width="5" height="5" fill="#ECE9D8" stroke="#000" stroke-width="1"/><rect x="0" y="3" width="6" height="2" fill="#000"/></svg><svg style="left:152px;top:115px" width="8" height="7" viewBox="0 0 8 7"><path d="M0.600 0.300 L7.400 6.700 M7.400 0.300 L0.600 6.700" stroke="#000" stroke-width="1.700"/></svg><div class="a" style="left:2px;top:131px;width:167px;height:215px;box-sizing:border-box;border:1px solid #7F9DB9;background:#fff;"></div><div class="a" style="left:3px;top:132px;width:148px;height:20px;background:linear-gradient(#ECE9D8 0,#ECE9D8 78%,#DAD6C6 92%,#CBC7B8 100%);"></div><div class="ui" style="left:10px;top:137px;">Function name</div><div class="a" style="left:3px;top:151px;width:6px;height:177px;background:linear-gradient(90deg,#D8D4C4,#F0EEE4);"></div><div class="a" style="left:9px;top:152px;width:142px;height:16px;background:#fff"></div><svg style="left:9px;top:152px" width="16" height="16" viewBox="0 0 16 16"><rect x="0.500" y="0.500" width="15" height="15" fill="#F2FBFF" stroke="#2C7CE8"/><rect x="1" y="1" width="14" height="2.200" fill="url(#gBlue)"/><path d="M11 4.400c-1.400-.600-2.200 0-2.600 1.700L7.100 12.100c-.4 1.700-1.400 2.200-2.900 1.700M6 7.600h4.500" fill="none" stroke="#141C3C" stroke-width="1.150"/></svg><div class="ui" style="left:31px;top:155px;"><b>Dll<i></i>ain(x,x,x)</b></div><div class="a" style="left:5px;top:156px;width:1px;height:8px;background:#B8B4A4;"></div><div class="a" style="left:9px;top:168px;width:142px;height:16px;background:#ECE9D8"></div><svg style="left:9px;top:168px" width="16" height="16" viewBox="0 0 16 16"><rect x="0.500" y="0.500" width="15" height="15" fill="#BCD0F4" stroke="#2C7CE8"/><rect x="1" y="1" width="14" height="2.200" fill="url(#gBlue)"/><path d="M11 4.400c-1.400-.600-2.200 0-2.600 1.700L7.100 12.100c-.4 1.700-1.400 2.200-2.900 1.700M6 7.600h4.500" fill="none" stroke="#141C3C" stroke-width="1.150"/></svg><div class="ui" style="left:31px;top:171px;">DLL2Print</div><div class="a" style="left:5px;top:172px;width:1px;height:8px;background:#B8B4A4;"></div><div class="a" style="left:9px;top:184px;width:142px;height:16px;background:#fff"></div><svg style="left:9px;top:184px" width="16" height="16" viewBox="0 0 16 16"><rect x="0.500" y="0.500" width="15" height="15" fill="#F2FBFF" stroke="#2C7CE8"/><rect x="1" y="1" width="14" height="2.200" fill="url(#gBlue)"/><path d="M11 4.400c-1.400-.600-2.200 0-2.600 1.700L7.100 12.100c-.4 1.700-1.400 2.200-2.900 1.700M6 7.600h4.500" fill="none" stroke="#141C3C" stroke-width="1.150"/></svg><div class="ui" style="left:31px;top:187px;">DLL2ReturnJ</div><div class="a" style="left:5px;top:188px;width:1px;height:8px;background:#B8B4A4;"></div><div class="a" style="left:9px;top:200px;width:142px;height:16px;background:#fff"></div><svg style="left:9px;top:200px" width="16" height="16" viewBox="0 0 16 16"><rect x="0.500" y="0.500" width="15" height="15" fill="#F2FBFF" stroke="#2C7CE8"/><rect x="1" y="1" width="14" height="2.200" fill="url(#gBlue)"/><path d="M11 4.400c-1.400-.600-2.200 0-2.600 1.700L7.100 12.100c-.4 1.700-1.400 2.200-2.900 1.700M6 7.600h4.500" fill="none" stroke="#141C3C" stroke-width="1.150"/></svg><div class="ui" style="left:31px;top:203px;">sub_1000105A</div><div class="a" style="left:5px;top:204px;width:1px;height:8px;background:#B8B4A4;"></div><div class="a" style="left:9px;top:216px;width:142px;height:16px;background:#D9FFFF"></div><svg style="left:9px;top:216px" width="16" height="16" viewBox="0 0 16 16"><rect x="0.500" y="0.500" width="15" height="15" fill="#F2FBFF" stroke="#2C7CE8"/><rect x="1" y="1" width="14" height="2.200" fill="url(#gBlue)"/><path d="M11 4.400c-1.400-.600-2.200 0-2.600 1.700L7.100 12.100c-.4 1.700-1.400 2.200-2.900 1.700M6 7.600h4.500" fill="none" stroke="#141C3C" stroke-width="1.150"/></svg><div class="ui" style="left:31px;top:219px;">_CRT_INIT(x,x,x)</div><div class="a" style="left:5px;top:220px;width:1px;height:8px;background:#B8B4A4;"></div><div class="a" style="left:9px;top:232px;width:142px;height:16px;background:#D9FFFF"></div><svg style="left:9px;top:232px" width="16" height="16" viewBox="0 0 16 16"><rect x="0.500" y="0.500" width="15" height="15" fill="#F2FBFF" stroke="#2C7CE8"/><rect x="1" y="1" width="14" height="2.200" fill="url(#gBlue)"/><path d="M11 4.400c-1.400-.600-2.200 0-2.600 1.700L7.100 12.100c-.4 1.700-1.400 2.200-2.900 1.700M6 7.600h4.500" fill="none" stroke="#141C3C" stroke-width="1.150"/></svg><div class="ui" style="left:31px;top:235px;"><b>DllEntryPoint</b></div><div class="a" style="left:5px;top:236px;width:1px;height:8px;background:#B8B4A4;"></div><div class="a" style="left:9px;top:248px;width:142px;height:16px;background:#D9FFFF"></div><svg style="left:9px;top:248px" width="16" height="16" viewBox="0 0 16 16"><rect x="0.500" y="0.500" width="15" height="15" fill="#F2FBFF" stroke="#2C7CE8"/><rect x="1" y="1" width="14" height="2.200" fill="url(#gBlue)"/><path d="M11 4.400c-1.400-.600-2.200 0-2.600 1.700L7.100 12.100c-.4 1.700-1.400 2.200-2.900 1.700M6 7.600h4.500" fill="none" stroke="#141C3C" stroke-width="1.150"/></svg><div class="ui" style="left:31px;top:251px;">__amsg_exit</div><div class="a" style="left:5px;top:252px;width:1px;height:8px;background:#B8B4A4;"></div><div class="a" style="left:9px;top:264px;width:142px;height:16px;background:#D9FFFF"></div><svg style="left:9px;top:264px" width="16" height="16" viewBox="0 0 16 16"><rect x="0.500" y="0.500" width="15" height="15" fill="#F2FBFF" stroke="#2C7CE8"/><rect x="1" y="1" width="14" height="2.200" fill="url(#gBlue)"/><path d="M11 4.400c-1.400-.600-2.200 0-2.600 1.700L7.100 12.100c-.4 1.700-1.400 2.200-2.900 1.700M6 7.600h4.500" fill="none" stroke="#141C3C" stroke-width="1.150"/></svg><div class="ui" style="left:31px;top:267px;">___initstdio</div><div class="a" style="left:5px;top:268px;width:1px;height:8px;background:#B8B4A4;"></div><div class="a" style="left:9px;top:280px;width:142px;height:16px;background:#D9FFFF"></div><svg style="left:9px;top:280px" width="16" height="16" viewBox="0 0 16 16"><rect x="0.500" y="0.500" width="15" height="15" fill="#F2FBFF" stroke="#2C7CE8"/><rect x="1" y="1" width="14" height="2.200" fill="url(#gBlue)"/><path d="M11 4.400c-1.400-.600-2.200 0-2.600 1.700L7.100 12.100c-.4 1.700-1.400 2.200-2.900 1.700M6 7.600h4.500" fill="none" stroke="#141C3C" stroke-width="1.150"/></svg><div class="ui" style="left:31px;top:283px;">___endstdio</div><div class="a" style="left:5px;top:284px;width:1px;height:8px;background:#B8B4A4;"></div><div class="a" style="left:9px;top:296px;width:142px;height:16px;background:#D9FFFF"></div><svg style="left:9px;top:296px" width="16" height="16" viewBox="0 0 16 16"><rect x="0.500" y="0.500" width="15" height="15" fill="#F2FBFF" stroke="#2C7CE8"/><rect x="1" y="1" width="14" height="2.200" fill="url(#gBlue)"/><path d="M11 4.400c-1.400-.600-2.200 0-2.600 1.700L7.100 12.100c-.4 1.700-1.400 2.200-2.900 1.700M6 7.600h4.500" fill="none" stroke="#141C3C" stroke-width="1.150"/></svg><div class="ui" style="left:31px;top:299px;">__lock_file</div><div class="a" style="left:5px;top:300px;width:1px;height:8px;background:#B8B4A4;"></div><div class="a" style="left:9px;top:312px;width:142px;height:16px;background:#D9FFFF"></div><svg style="left:9px;top:312px" width="16" height="16" viewBox="0 0 16 16"><rect x="0.500" y="0.500" width="15" height="15" fill="#F2FBFF" stroke="#2C7CE8"/><rect x="1" y="1" width="14" height="2.200" fill="url(#gBlue)"/><path d="M11 4.400c-1.400-.600-2.200 0-2.600 1.700L7.100 12.100c-.4 1.700-1.400 2.200-2.900 1.700M6 7.600h4.500" fill="none" stroke="#141C3C" stroke-width="1.150"/></svg><div class="ui" style="left:31px;top:315px;">__lock_file2</div><div class="a" style="left:5px;top:316px;width:1px;height:8px;background:#B8B4A4;"></div><div class="a" style="left:151px;top:132px;width:17px;height:196px;background:linear-gradient(90deg,#F3F1EC,#FEFEFB);"></div><div class="sbtn" style="left:152px;top:132px;width:15px;height:16px;"></div><svg style="left:155px;top:136px" width="9" height="7" viewBox="0 0 9 7"><path d="M1 6 L4.500 2.500 L8 6" fill="none" stroke="#4D6185" stroke-width="2"/></svg><div class="sbtn" style="left:152px;top:149px;width:15px;height:12px;"></div><div class="sbtn" style="left:152px;top:311px;width:15px;height:17px;"></div><svg style="left:155px;top:316px" width="9" height="7" viewBox="0 0 9 7"><path d="M1 1 L4.500 4.500 L8 1" fill="none" stroke="#4D6185" stroke-width="2"/></svg><div class="a" style="left:3px;top:328px;width:149px;height:17px;background:linear-gradient(#F3F1EC,#FEFEFB);"></div><div class="a" style="left:152px;top:328px;width:16px;height:17px;background:#ECE9D8;"></div><div class="sbtn" style="left:3px;top:328px;width:16px;height:17px;"></div><svg style="left:7px;top:332px" width="7" height="9" viewBox="0 0 7 9"><path d="M6 1 L2.500 4.500 L6 8" fill="none" stroke="#4D6185" stroke-width="2"/></svg><div class="sbtn" style="left:20px;top:328px;width:19px;height:17px;"></div><svg style="left:25px;top:333px" width="9" height="7" viewBox="0 0 9 7"><path d="M1.500 0v7M3.500 0v7M5.500 0v7M7.500 0v7" stroke="#EEF4FE" stroke-width="1"/><path d="M2.500 1v7M4.500 1v7M6.500 1v7M8.500 1v7" stroke="#8CB0F8" stroke-width="1"/></svg><div class="sbtn" style="left:135px;top:328px;width:16px;height:17px;"></div><svg style="left:140px;top:332px" width="7" height="9" viewBox="0 0 7 9"><path d="M1 1 L4.500 4.500 L1 8" fill="none" stroke="#4D6185" stroke-width="2"/></svg><div class="ui" style="left:7px;top:349px;">Line 2 of 139</div><div class="ptitle" style="left:2px;top:367px;width:167px;height:20px;"></div><svg style="left:7px;top:370px" width="15" height="15" viewBox="0 0 15 15"><g fill="#4C7CE0" stroke="#1C3CA0" stroke-width=".8"><rect x="5" y="0.500" width="5" height="4"/><rect x="0.500" y="9" width="3" height="5"/><rect x="4.300" y="9" width="3" height="5"/><rect x="8.100" y="9" width="3" height="5"/><rect x="11.900" y="9" width="2.800" height="5"/></g><path d="M7.500 4.500v2.500M2 9V7h11.500v2M5.800 7v2M9.600 7v2" fill="none" stroke="#1C3CA0" stroke-width="1"/></svg><div class="ui" style="left:27px;top:372px;">Graph overv</div><svg style="left:93px;top:377px" width="12" height="2" viewBox="0 0 12 2"><path d="M1 0h2v2h-2zM5 0h2v2h-2zM9 0h2v2h-2z" fill="#000"/></svg><svg style="left:111px;top:372px" width="9" height="9" viewBox="0 0 9 9"><rect x="0.500" y="0.500" width="8" height="8" fill="none" stroke="#000" stroke-width="1"/><rect x="0" y="0" width="9" height="2" fill="#000"/></svg><svg style="left:132px;top:372px" width="8" height="9" viewBox="0 0 8 9"><rect x="2.500" y="0.500" width="5" height="5" fill="none" stroke="#000" stroke-width="1"/><rect x="2" y="0" width="6" height="2" fill="#000"/><rect x="0.500" y="3.500" width="5" height="5" fill="#ECE9D8" stroke="#000" stroke-width="1"/><rect x="0" y="3" width="6" height="2" fill="#000"/></svg><svg style="left:152px;top:373px" width="8" height="7" viewBox="0 0 8 7"><path d="M0.600 0.300 L7.400 6.700 M7.400 0.300 L0.600 6.700" stroke="#000" stroke-width="1.700"/></svg><div class="a" style="left:2px;top:388px;width:167px;height:101px;background:#fff;"></div><div class="a" style="left:2px;top:388px;width:167px;height:101px;overflow:hidden;"><div class="a" style="left:9px;top:2px;width:147px;height:98px;box-sizing:border-box;border:1px solid #000;background:#fff;"></div><div class="a" style="left:156px;top:6px;width:4px;height:100px;background:linear-gradient(90deg,rgba(50,50,50,.95),rgba(100,100,100,.7) 50%,rgba(200,200,200,0));-webkit-mask-image:linear-gradient(transparent 0,#000 3px);"></div></div><div class="a" style="left:2px;top:483px;width:167px;height:1px;background-image:linear-gradient(90deg,#000 1px,transparent 1px);background-size:3px 1px;"></div><div class="a" style="left:172px;top:132px;width:674px;height:1px;background:#8CA5BE;"></div><div class="a" style="left:172px;top:105px;width:644px;height:27px;overflow:hidden;"><div class="a" style="left:-172px;top:-105px;width:851px;height:200px;"><div class="tab" style="left:297px;top:110px;width:122px;height:22px;"></div><svg style="left:308px;top:112px" width="16" height="16" viewBox="0 0 16 16"><rect x="0.500" y="0.500" width="14" height="14" fill="#F2FAFF" stroke="#3C84E8"/><rect x="1" y="1" width="13" height="2.200" fill="url(#gBlue)"/><path d="M7.500 4.800 L11 6.800 V10.800 L7.500 12.800 L4 10.800 V6.800Z" fill="#DCE8FF" stroke="#2C2CF0" stroke-width="1.200"/></svg><div class="ui" style="left:328px;top:116px;">Hex View-1</div><div class="cls" style="left:393px;top:115px;"></div><svg style="left:393px;top:115px" width="13" height="13" viewBox="0 0 13 13"><path d="M3.500 3.500 L9.500 9.500 M9.500 3.500 L3.500 9.500" stroke="#ECE9D8" stroke-width="1.800"/></svg><div class="tab" style="left:420px;top:110px;width:123px;height:22px;"></div><svg style="left:432px;top:112px" width="16" height="16" viewBox="0 0 16 16"><rect x="0.500" y="0.500" width="14" height="14" fill="#F2FAFF" stroke="#3C84E8"/><rect x="1" y="1" width="13" height="2.200" fill="url(#gBlue)"/><path d="M4.500 13 L6.800 5 H8.800 L11 13 M6.300 7.500h3 M5.500 12l4-3.500" fill="none" stroke="#1C3C88" stroke-width="1.300"/></svg><div class="ui" style="left:451px;top:116px;">Structures</div><div class="cls" style="left:516px;top:115px;"></div><svg style="left:516px;top:115px" width="13" height="13" viewBox="0 0 13 13"><path d="M3.500 3.500 L9.500 9.500 M9.500 3.500 L3.500 9.500" stroke="#ECE9D8" stroke-width="1.800"/></svg><div class="tab" style="left:544px;top:110px;width:93px;height:22px;"></div><svg style="left:556px;top:112px" width="16" height="16" viewBox="0 0 16 16"><rect x="0.500" y="0.500" width="15" height="14" fill="#F2FAFF" stroke="#3C84E8"/><rect x="1" y="1" width="14" height="2.200" fill="url(#gBlue)"/><g fill="#30E0FF" stroke="#1C50D0" stroke-width=".8"><path d="M5.500 3 L7 4.500 L5.500 6 L4 4.500Z"/><path d="M5.500 7 L7 8.500 L5.500 10 L4 8.500Z"/><path d="M5.500 11 L7 12.500 L5.500 14 L4 12.500Z"/></g><path d="M8.500 4.500h3M8.500 8.500h3M8.500 12.500h3" stroke="#1C50D0" stroke-width="1.200"/></svg><div class="ui" style="left:576px;top:116px;">Enums</div><div class="cls" style="left:610px;top:115px;"></div><svg style="left:610px;top:115px" width="13" height="13" viewBox="0 0 13 13"><path d="M3.500 3.500 L9.500 9.500 M9.500 3.500 L3.500 9.500" stroke="#ECE9D8" stroke-width="1.800"/></svg><div class="tab" style="left:638px;top:110px;width:105px;height:22px;"></div><svg style="left:650px;top:112px" width="16" height="16" viewBox="0 0 16 16"><rect x="0.500" y="0.500" width="14" height="14" fill="#F2FAFF" stroke="#3C84E8"/><rect x="1" y="1" width="13" height="2.200" fill="url(#gBlue)"/><rect x="6.500" y="5.500" width="9" height="10" fill="#EEF4FF" stroke="#2C5CA8"/><path d="M8.500 7.500h5M8.500 9.500h5M8.500 11.500h5M8.500 13.500h5" stroke="#1414C8" stroke-width="1"/><path d="M1 4.300 L4 5.800 V4 L8 7 L4 10 V8.300 L1 9.700 L2.500 7Z" fill="#2CD83C" stroke="#0A5A1A" stroke-width=".7"/></svg><div class="ui" style="left:670px;top:116px;">Imports</div><div class="cls" style="left:716px;top:115px;"></div><svg style="left:716px;top:115px" width="13" height="13" viewBox="0 0 13 13"><path d="M3.500 3.500 L9.500 9.500 M9.500 3.500 L3.500 9.500" stroke="#ECE9D8" stroke-width="1.800"/></svg><div class="tab" style="left:744px;top:110px;width:110px;height:22px;"></div><svg style="left:756px;top:112px" width="16" height="16" viewBox="0 0 16 16"><rect x="1.500" y="0.500" width="14" height="14" fill="#F2FAFF" stroke="#3C84E8"/><rect x="2" y="1" width="13" height="2.200" fill="url(#gBlue)"/><rect x="0.500" y="5.500" width="9" height="10" fill="#EEF4FF" stroke="#2C5CA8"/><path d="M2.500 7.500h4M2.500 9.500h4M2.500 11.500h4M2.500 13.500h4" stroke="#1414C8" stroke-width="1"/><path d="M7 9 C7 6.500 8.500 5.700 10.500 5.700 V4 L14.300 7 L10.500 10 V8.300 C9 8.300 8 8.500 7 9Z" fill="#2CD83C" stroke="#0A5A1A" stroke-width=".7"/></svg><div class="ui" style="left:776px;top:116px;">Exports</div><div class="cls" style="left:900px;top:115px;"></div><svg style="left:900px;top:115px" width="13" height="13" viewBox="0 0 13 13"><path d="M3.500 3.500 L9.500 9.500 M9.500 3.500 L3.500 9.500" stroke="#ECE9D8" stroke-width="1.800"/></svg></div></div><div class="tab" style="left:172px;top:108px;width:126px;height:24px;background:linear-gradient(#fff 50%,#F4F5FA);border-color:#919B9C;border-top:none;"></div><div class="a" style="left:172px;top:108px;width:126px;height:3px;border-radius:3px 3px 0 0;background:linear-gradient(#E68B2C,#FFC73C);"></div><svg style="left:184px;top:111px" width="16" height="16" viewBox="0 0 16 16"><rect x="0.500" y="0.500" width="13" height="13" fill="#E2F6FF" stroke="#2C7CE8"/><rect x="1" y="1" width="12" height="2" fill="url(#gBlue)"/><rect x="5.500" y="3.500" width="10" height="12" fill="#F2F7FF" stroke="#1C4C9C"/><path d="M7 5.500h3.500M9 7.500h5M9 9.500h5M7 11.500h3.500M9 13.500h5" stroke="#66768A" stroke-width="1"/></svg><div class="ui" style="left:204px;top:115px;">IDA View-A</div><div class="cls" style="left:268px;top:113px;background:#D9573B;border-color:#C8452C;"></div><svg style="left:268px;top:113px" width="13" height="13" viewBox="0 0 13 13"><path d="M3.500 3.500 L9.500 9.500 M9.500 3.500 L3.500 9.500" stroke="#fff" stroke-width="1.800"/></svg><div class="a" style="left:816px;top:109px;width:30px;height:22px;background:#ECE9D8;"></div><div class="a" style="left:817px;top:110px;width:12px;height:20px;box-sizing:border-box;border:1px solid #E0DDCF;border-radius:3px;background:#F1EFE6;"></div><svg style="left:821px;top:115px" width="5" height="9" viewBox="0 0 5 9"><path d="M4.500 0.500v8l-4-4z" fill="#B5B2A4"/></svg><div class="a" style="left:831px;top:109px;width:14px;height:22px;box-sizing:border-box;border:1px solid #3C5CA8;border-radius:3px;background:#fff;box-shadow:inset 0 0 0 1px #C4D4F4;"></div><svg style="left:836px;top:115px" width="5" height="9" viewBox="0 0 5 9"><path d="M0.500 0.500v8l4-4z" fill="#000"/></svg><div class="a" style="left:172px;top:133px;width:674px;height:356px;box-sizing:border-box;border:1px solid #8CA5BE;border-top:none;background:#ECE9D8;"></div><div class="a" style="left:173px;top:487px;width:672px;height:1px;background:#fff;"></div><div class="a" style="left:844px;top:468px;width:1px;height:20px;background:#fff;"></div><div class="a" style="left:173px;top:468px;width:1px;height:20px;background:#fff;"></div><div class="a" id="gv" style="left:173px;top:133px;width:672px;height:335px;overflow:hidden;background:linear-gradient(90deg,rgba(255,255,255,0) 55%,rgba(226,246,255,.35) 100%),linear-gradient(#FFFFFF 0,#FBFEFF 12%,#D8F5FF 100%);"><div class="a" style="left:100px;top:32px;width:470px;height:320px;box-sizing:border-box;border:1px solid #000;background:#fff;"></div><div class="a" style="left:570px;top:37px;width:5px;height:300px;background:linear-gradient(90deg,rgba(70,70,70,.9),rgba(110,110,110,.65) 45%,rgba(170,170,170,.25) 80%,rgba(220,220,220,0));-webkit-mask-image:linear-gradient(transparent 0,#000 3px);"></div><div class="a" style="left:100px;top:51px;width:470px;height:1px;background:#000;"></div></div><svg style="left:275px;top:167px" width="16" height="16" viewBox="0 0 16 16"><rect x="0.500" y="0.500" width="15" height="15" fill="url(#gRain)" stroke="#0A0A5A"/><rect x="1" y="1" width="14" height="14" fill="url(#gRainV)"/></svg><svg style="left:295px;top:166px" width="17" height="17" viewBox="0 0 17 17"><rect x="0.700" y="7.700" width="14.600" height="8" fill="#1C38C0" stroke="#0A1A90" stroke-width="1.400"/><rect x="2" y="9" width="12" height="5.500" fill="none" stroke="#fff" stroke-width=".8"/><path d="M4 13.500 L5 11 L13.500 2.500 L15.500 4 L7 12.500Z" fill="#F4B83C" stroke="#C47A14" stroke-width=".6"/><path d="M13.500 2.500 L14.600 1.400 L16.400 3 L15.500 4Z" fill="#BCE4F8" stroke="#5A9CC8" stroke-width=".5"/></svg><svg style="left:315px;top:167px" width="16" height="15" viewBox="0 0 16 15"><rect x="0.500" y="0.500" width="15" height="14" fill="#fff" stroke="#3C8CE8"/><rect x="1" y="1" width="14" height="2.500" fill="#3C8CE8"/><path d="M3 5v6h4M5 9l2 2-2 2" fill="none" stroke="#1C3CA0" stroke-width="1"/><path d="M6 5l1.500 1.500L9 5M10 5l1.500 1.500L13 5" fill="none" stroke="#1C3CA0" stroke-width="1"/><rect x="8" y="9.500" width="6" height="2.500" fill="#E02020" stroke="#F8C030" stroke-width=".5"/></svg><div class="code" style="left:276px;top:189px;color:#0000FF;">; Exported entry   1. DLL2Print</div><div class="code" style="left:276px;top:237px;color:#808080;">; Attributes: bp-based frame</div><div class="code" style="left:276px;top:269px;color:#0000FF;">public DLL2Print</div><div class="code" style="left:276px;top:285px;color:#0000FF;">DLL2Print proc near</div><div class="a" style="left:276px;top:300px;width:32px;height:16px;background:#FFFF00;"></div><div class="code" style="left:276px;top:301px;color:#000080;">push</div><div class="code" style="left:340px;top:301px;color:#000080;">ebp</div><div class="code" style="left:276px;top:317px;color:#000080;">mov</div><div class="code" style="left:340px;top:317px;color:#000080;">ebp, esp</div><div class="code" style="left:276px;top:333px;color:#000080;">mov</div><div class="code" style="left:340px;top:333px;color:#000080;">eax, dword_1000B078</div><div class="a" style="left:276px;top:348px;width:32px;height:16px;background:#FFFF00;"></div><div class="code" style="left:276px;top:349px;color:#000080;">push</div><div class="code" style="left:340px;top:349px;color:#000080;">eax</div><div class="a" style="left:276px;top:364px;width:32px;height:16px;background:#FFFF00;"></div><div class="code" style="left:276px;top:365px;color:#000080;">push</div><div class="code" style="left:340px;top:365px;color:#000080;">offset aDll2MysteryDat</div><div class="code" style="left:524px;top:365px;color:#808080;">; "DLL 2 mystery data %d\n"</div><div class="code" style="left:276px;top:381px;color:#000080;">call</div><div class="code" style="left:340px;top:381px;color:#000080;">sub_1000105A</div><div class="code" style="left:276px;top:397px;color:#000080;">add</div><div class="code" style="left:340px;top:397px;color:#000080;">esp, </div><div class="code" style="left:380px;top:397px;color:#008000;">8</div><div class="code" style="left:276px;top:413px;color:#000080;">pop</div><div class="code" style="left:340px;top:413px;color:#000080;">ebp</div><div class="code" style="left:276px;top:429px;color:#000080;">retn</div><div class="code" style="left:276px;top:445px;color:#0000FF;">DLL2Print endp</div><div class="a" style="left:379px;top:329px;width:131px;height:17px;box-sizing:border-box;border:1px solid #F03C3C;"></div><div class="a" style="left:327px;top:378px;width:135px;height:17px;box-sizing:border-box;border:1px solid #F03C3C;"></div><div class="a" style="left:541px;top:356px;width:193px;height:27px;box-sizing:border-box;border:1px solid #F03C3C;"></div><div class="a" style="left:648px;top:428px;font-family:'Liberation Sans',sans-serif;font-size:29.5px;line-height:32px;color:#FF3030;white-space:pre;transform:scaleX(0.965);transform-origin:0 0;-webkit-text-stroke:0.3px #FF3030;">@20145326</div><div class="st" style="left:174px;top:471px;">100.00%</div><div class="st" style="left:229px;top:471px;">(-100,-32)</div><div class="st" style="left:305px;top:471px;">(98,281)</div><div class="st" style="left:367px;top:471px;">00001030</div><div class="st" style="left:430px;top:471px;">10001030: DLL2Print</div><div class="a" style="left:223px;top:471px;width:1px;height:13px;background:#ACA899;"></div><div class="a" style="left:224px;top:471px;width:1px;height:13px;background:#fff;"></div><div class="a" style="left:299px;top:471px;width:1px;height:13px;background:#ACA899;"></div><div class="a" style="left:300px;top:471px;width:1px;height:13px;background:#fff;"></div><div class="a" style="left:361px;top:471px;width:1px;height:13px;background:#ACA899;"></div><div class="a" style="left:362px;top:471px;width:1px;height:13px;background:#fff;"></div><div class="a" style="left:424px;top:471px;width:1px;height:13px;background:#ACA899;"></div><div class="a" style="left:425px;top:471px;width:1px;height:13px;background:#fff;"></div><div class="a" style="left:563px;top:471px;width:1px;height:13px;background:#ACA899;"></div><div class="a" style="left:564px;top:471px;width:1px;height:13px;background:#fff;"></div><div class="ptitle" style="left:2px;top:493px;width:844px;height:20px;"></div><svg style="left:7px;top:495px" width="14" height="16" viewBox="0 0 14 16"><rect x="0.500" y="0.500" width="13" height="15" fill="#fff" stroke="#3C74D8"/><rect x="1" y="1" width="12" height="2.500" fill="#2A6CE4"/><path d="M3 6.500h8M3 8.500h8M3 10.500h8M3 12.500h8" stroke="#5C6C8C" stroke-width="1"/></svg><div class="ui" style="left:27px;top:498px;">Output window</div><svg style="left:788px;top:498px" width="9" height="9" viewBox="0 0 9 9"><rect x="0.500" y="0.500" width="8" height="8" fill="none" stroke="#000" stroke-width="1"/><rect x="0" y="0" width="9" height="2" fill="#000"/></svg><svg style="left:809px;top:498px" width="8" height="9" viewBox="0 0 8 9"><rect x="2.500" y="0.500" width="5" height="5" fill="none" stroke="#000" stroke-width="1"/><rect x="2" y="0" width="6" height="2" fill="#000"/><rect x="0.500" y="3.500" width="5" height="5" fill="#ECE9D8" stroke="#000" stroke-width="1"/><rect x="0" y="3" width="6" height="2" fill="#000"/></svg><svg style="left:829px;top:499px" width="8" height="7" viewBox="0 0 8 7"><path d="M0.600 0.300 L7.400 6.700 M7.400 0.300 L0.600 6.700" stroke="#000" stroke-width="1.700"/></svg><div class="a" style="left:2px;top:515px;width:844px;height:30px;box-sizing:border-box;border:1px solid #7F9DB9;border-bottom:none;background:#fff;"></div><div class="code" style="left:6px;top:518px;color:#000;">Python 2.7.2 (default, Jun 12 2011, 15:08:59) [MSC v.1500 32 bit (Intel)]</div><div class="code" style="left:6px;top:534px;color:#000;">IDAPython v1.7.0 final (serial 0) (c) The IDAPython Team &lt;idapython@googlegroups.com&gt;</div><div class="a" style="left:829px;top:516px;width:16px;height:29px;background:linear-gradient(90deg,#F3F1EC,#FEFEFB);"></div><div class="sbtn" style="left:829px;top:517px;width:16px;height:16px;"></div><svg style="left:833px;top:522px" width="9" height="7" viewBox="0 0 9 7"><path d="M1 6 L4.500 2.500 L8 6" fill="none" stroke="#4D6185" stroke-width="2"/></svg></div></body></html>
